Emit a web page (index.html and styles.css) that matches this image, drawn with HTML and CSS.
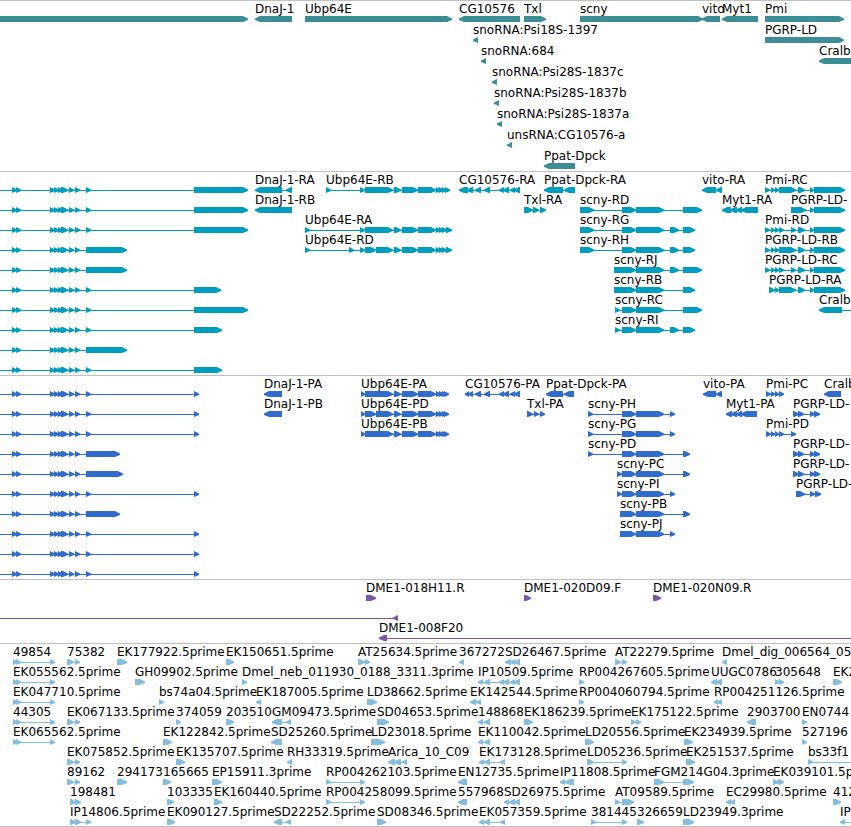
FILE: index.html
```html
<!DOCTYPE html>
<html lang="en">
<head>
  <meta charset="UTF-8" />
  <meta name="viewport" content="width=device-width, initial-scale=1.0"/>
  <title>Genome Browser</title>
  <link rel="stylesheet" href="styles.css">
</head>
<body>
  <main class="browser">
    <section class="track genes" id="genes" aria-label="Genes"></section>
    <section class="track transcripts" id="transcripts" aria-label="Transcripts"></section>
    <section class="track proteins" id="proteins" aria-label="Proteins"></section>
    <section class="track clones" id="clones" aria-label="BAC ends"></section>
    <section class="track ests" id="ests" aria-label="ESTs"></section>
  </main>

  <script src="tracks.js"></script>
</body>
</html>
```

FILE: styles.css
```css
body {
  margin: 0;
  background: #fff;
  color: #000;
  font-family: "DejaVu Sans", sans-serif;
  font-size: 12px;
}

.browser {
  overflow: hidden;
  border-bottom: 1px solid #c0c0c0;
}

.track {
  border-top: 1px solid #c0c0c0;
  padding-bottom: 3px;
}

.row {
  position: relative;
  height: 20px;
}

/* features sit at their genome position inside the row */
.label {
  position: absolute;
  top: 0;
  line-height: 16px;
  white-space: nowrap;
}

.glyphs {
  display: block;
  width: 100%;
  height: 20px;
  overflow: visible;
  fill: currentColor;
}

.genes {
  padding-bottom: 2px;
}

.genes .row {
  height: 21px;
}

.ests {
  padding-bottom: 2px;
}

.genes .glyphs {
  color: #3d8e94;
}

.transcripts .glyphs {
  color: #009dbf;
}

.proteins .glyphs {
  color: #2f6ccb;
}

.clones .glyphs {
  color: #7657a8;
}

.ests .glyphs {
  color: #85bddf;
}
```

FILE: tracks.js
```js
// feature: [label, strand, blocks, line start, line end]
const EDGE = 4000;

const head = [[12,17],[16,21],[50,55],[54,59],[58,63],[61,68],[69,74],[75,80]];
const long = (a, b) => ["", "+", [...head, [86,91], [a,b]], 0];
const short = b => ["", "+", [...head, [86,b]], 0];

const ubp = [[394,401],[402,418],[418,436],[436,441],[439,444],[442,447]];
const cg = [[475,481],[484,490],[499,504],[503,509],[510,515],[514,520]];
const scny = [[622,636],[636,664]];
const pmi = [[771,775],[775,779]];
const ld = [[798,805],[810,814],[814,845]];
const ldp = [[793,799],[798,804],[810,815],[814,820]];
const ek = [[13,18],[16,21],[50,55]];
const ek2 = [[67,74],[75,80]];

const tracks = {
  genes: [
    [
      ["", "+", [[-10,248]]],
      ["DnaJ-1", "-", [[255,292]]],
      ["Ubp64E", "+", [[305,452]]],
      ["CG10576", "-", [[459,520]]],
      ["Txl", "+", [[524,546]]],
      ["scny", "+", [[580,703]]],
      ["vito", "-", [[702,720]]],
      ["Myt1", "-", [[722,758]]],
      ["Pmi", "+", [[765,844]]]
    ],
    [
      ["snoRNA:Psi18S-1397", "-", [[473,478]]],
      ["PGRP-LD", "+", [[765,844]]]
    ],
    [
      ["snoRNA:684", "-", [[481,486]]],
      ["Cralb", "-", [[819,EDGE]]]
    ],
    [["snoRNA:Psi28S-1837c", "-", [[492,497]]]],
    [["snoRNA:Psi28S-1837b", "-", [[494,499]]]],
    [["snoRNA:Psi28S-1837a", "-", [[497,502]]]],
    [["unsRNA:CG10576-a", "-", [[507,512]]]],
    [["Ppat-Dpck", "-", [[544,575]]]]
  ],

  transcripts: [
    [
      long(194, 248),
      ["DnaJ-1-RA", "-", [[255,282],[286,292]]],
      ["Ubp64E-RB", "+", [[326,331],[360,365],[365,393],...ubp,[445,450]]],
      ["CG10576-RA", "-", [[459,468],[467,473],...cg]],
      ["Ppat-Dpck-RA", "-", [[544,563],[564,575]]],
      ["vito-RA", "-", [[702,716],[716,722]]],
      ["Pmi-RC", "+", [[765,770],...pmi,[779,796],...ld]]
    ],
    [
      long(194, 248),
      ["DnaJ-1-RB", "-", [[255,292]]],
      ["Txl-RA", "+", [[524,533],[533,539],[540,546]]],
      ["scny-RD", "+", [[580,594],...scny,[683,702]]],
      ["Myt1-RA", "-", [[722,731],[730,737],[736,742],[741,758]]],
      ["PGRP-LD-", "+", [[791,806],[810,814],[814,845]]]
    ],
    [
      long(194, 248),
      ["Ubp64E-RA", "+", [[305,310],[360,365],[365,393],...ubp,[446,452]]],
      ["scny-RG", "+", [[580,594],...scny,[670,679],[683,695]]],
      ["Pmi-RD", "+", [[765,770],...pmi,[779,784],[791,796],...ld]]
    ],
    [
      short(127),
      ["Ubp64E-RD", "+", [[305,310],[349,354],[360,365],[365,376],[376,393],...ubp,[446,452]]],
      ["scny-RH", "+", [[580,594],...scny,[670,679],[683,695]]],
      ["PGRP-LD-RB", "+", [[765,770],...pmi,[779,796],...ld]]
    ],
    [
      short(127),
      ["scny-RJ", "+", [[614,636],[636,664],[670,679],[683,702]]],
      ["PGRP-LD-RC", "+", [[765,770],...pmi,[779,784],[791,796],...ld]]
    ],
    [
      long(194, 221),
      ["scny-RB", "+", [[614,636],[636,664],[683,695]]],
      ["PGRP-LD-RA", "+", [[769,775],[775,779],[779,796],...ld]]
    ],
    [
      long(194, 248),
      ["scny-RC", "+", [[615,620],...scny,[683,702]]],
      ["Cralb", "-", [[819,842]], 819, EDGE]
    ],
    [
      long(194, 222),
      ["scny-RI", "+", [[615,620],...scny,[670,679],[683,695]]]
    ],
    [short(127)],
    [long(194, 222)]
  ],

  proteins: [
    [
      long(194, 199),
      ["DnaJ-1-PA", "-", [[264,282]]],
      ["Ubp64E-PA", "+", [[361,365],[365,393],...ubp,[444,449]]],
      ["CG10576-PA", "-", [[465,469],[468,473],...cg]],
      ["Ppat-Dpck-PA", "-", [[546,563],[564,574]]],
      ["vito-PA", "-", [[703,716],[716,722]]],
      ["Pmi-PC", "+", [[766,771],...pmi,[779,784]]],
      ["Cralb", "-", [[824,841]]]
    ],
    [
      long(194, 199),
      ["DnaJ-1-PB", "-", [[264,282]]],
      ["Ubp64E-PD", "+", [[361,365],[365,376],[376,393],...ubp,[444,449]]],
      ["Txl-PA", "+", [[527,533],[534,539],[540,545]]],
      ["scny-PH", "+", [[588,593],...scny,[670,675]]],
      ["Myt1-PA", "-", [[726,732],[731,737],[736,742],[741,757]]],
      ["PGRP-LD-", "+", ldp]
    ],
    [
      long(194, 199),
      ["Ubp64E-PB", "+", [[361,365],[365,393],...ubp,[444,449]]],
      ["scny-PG", "+", [[588,593],...scny,[670,675]]],
      ["Pmi-PD", "+", [[766,771],...pmi,[779,784],[791,796]]]
    ],
    [
      short(120),
      ["scny-PD", "+", [[588,593],...scny,[683,690]]],
      ["PGRP-LD-", "+", ldp]
    ],
    [
      short(123),
      ["scny-PC", "+", [[617,622],...scny,[683,690]]],
      ["PGRP-LD-", "+", ldp]
    ],
    [
      long(194, 199),
      ["scny-PI", "+", [[617,622],...scny,[670,675]]],
      ["PGRP-LD-", "+", [[796,805],[810,815],[815,821]]]
    ],
    [
      short(120),
      ["scny-PB", "+", [[620,636],[636,664],[683,690]]]
    ],
    [
      long(194, 199),
      ["scny-PJ", "+", [[620,636],[636,664],[670,675]]]
    ],
    [long(194, 199)],
    [long(194, 199)]
  ],

  clones: [
    [
      ["DME1-018H11.R", "+", [[366,376]]],
      ["DME1-020D09.F", "+", [[524,531]]],
      ["DME1-020N09.R", "+", [[653,661]]]
    ],
    [["", "-", [[393,398]], 0]],
    [["DME1-008F20", "-", [[379,387]], 379, EDGE]]
  ],

  ests: [
    [
      ["49854", "+", ek],
      ["75382", "+", ek2],
      ["EK177922.5prime", "+", [[117,127]]],
      ["EK150651.5prime", "+", [[226,234]]],
      ["AT25634.5prime", "+", [[358,365],[365,370]]],
      ["367272", "-", [[459,464]]],
      ["SD26467.5prime", "-", [[505,511],[510,515],[514,520]]],
      ["AT22279.5prime", "+", [[615,621],[622,627]]],
      ["Dmel_dig_006564_05", "-", [[722,727]]]
    ],
    [
      ["EK055562.5prime", "+", ek],
      ["GH09902.5prime", "+", [[135,145]]],
      ["Dmel_neb_011930_0188_3311.3prime", "+", [[242,247]]],
      ["IP10509.5prime", "-", [[478,483],[484,490],[499,504],[503,509],[510,515],[514,520]]],
      ["RP004267605.5prime", "+", [[579,584]]],
      ["UUGC0786", "-", [[711,717],[716,722]]],
      ["305648", "+", [[775,780],[779,784]]],
      ["EK2", "+", [[833,842]]]
    ],
    [
      ["EK047710.5prime", "+", ek],
      ["bs74a04.5prime", "+", [[159,164]]],
      ["EK187005.5prime", "-", [[256,261]]],
      ["LD38662.5prime", "+", [[367,377]]],
      ["EK142544.5prime", "-", [[470,476],[476,481]]],
      ["RP004060794.5prime", "+", [[579,584]]],
      ["RP004251126.5prime", "-", [[714,718],[717,722]]]
    ],
    [
      ["44305", "+", ek],
      ["EK067133.5prime", "+", ek2],
      ["374059", "+", [[176,181]]],
      ["203510", "+", [[226,234]]],
      ["GM09473.5prime", "-", [[272,282],[286,291]]],
      ["SD04653.5prime", "+", [[377,389]]],
      ["148868", "-", [[478,483],[484,490]]],
      ["EK186239.5prime", "+", [[524,533]]],
      ["EK175122.5prime", "+", [[631,636],[636,641]]],
      ["2903700", "-", [[747,756]]],
      ["EN0744", "+", [[802,807]]]
    ],
    [
      ["EK065562.5prime", "+", ek],
      ["EK122842.5prime", "+", [[163,172]]],
      ["SD25260.5prime", "-", [[271,282]]],
      ["LD23018.5prime", "+", [[371,385]]],
      ["EK110042.5prime", "-", [[478,483],[484,490]]],
      ["LD20556.5prime", "+", [[585,594]]],
      ["EK234939.5prime", "+", [[684,693]]],
      ["527196", "+", [[802,807]]]
    ],
    [
      ["EK075852.5prime", "+", ek2],
      ["EK135707.5prime", "+", [[176,185]]],
      ["RH33319.5prime", "-", [[287,292]]],
      ["Arica_10_C09", "-", [[388,395],[394,401],[402,407]]],
      ["EK173128.5prime", "-", [[479,484],[484,490],[500,505]]],
      ["LD05236.5prime", "+", [[587,594],[622,627]]],
      ["EK251537.5prime", "+", [[686,695]]],
      ["bs33f1", "+", [[808,813]], 808, EDGE]
    ],
    [
      ["89162", "+", ek2],
      ["294173", "+", [[117,127]]],
      ["165665", "+", [[163,171]]],
      ["EP15911.3prime", "+", [[212,222]]],
      ["RP004262103.5prime", "+", [[326,331],[360,365]]],
      ["EN12735.5prime", "-", [[458,467]]],
      ["IP11808.5prime", "-", [[560,565],[565,574]]],
      ["FGM214G04.3prime", "+", [[654,664],[683,694]]],
      ["EK039101.5prime", "+", [[773,779],[778,784]]]
    ],
    [
      ["198481", "+", [[70,76],[75,81]]],
      ["103335", "+", [[167,174]]],
      ["EK160440.5prime", "+", [[214,222]]],
      ["RP004258099.5prime", "+", [[326,331],[360,365]]],
      ["557968", "-", [[458,467]]],
      ["SD26975.5prime", "-", [[504,509],[509,515],[514,520]]],
      ["AT09589.5prime", "+", [[615,620],[622,634]]],
      ["EC29980.5prime", "-", [[726,731],[730,735]]],
      ["412", "+", [[833,841]]]
    ],
    [
      ["IP14806.5prime", "+", [[70,76],[75,81],[86,91]]],
      ["EK090127.5prime", "+", [[167,175]]],
      ["SD22252.5prime", "-", [[274,282],[286,291]]],
      ["SD08346.5prime", "+", [[377,386]]],
      ["EK057359.5prime", "-", [[479,484],[484,490],[500,505]]],
      ["381445", "+", [[591,596],[622,627]]],
      ["326659", "+", [[637,644]]],
      ["LD23949.3prime", "+", [[683,694]]],
      ["IP", "-", [[840,845]], 840, EDGE]
    ]
  ]
};

// a block is a bar with a blunt 5px arrow head on its strand side
function blockPath(strand, a, b) {
  if (strand === "+") {
    const neck = Math.max(a, b - 5);
    return `M${a} 15H${neck}L${b} 17.5V19L${neck} 21H${a}Z`;
  }
  const neck = Math.min(b, a + 5);
  return `M${b} 15H${neck}L${a} 17.5V19L${neck} 21H${b}Z`;
}

function drawRow(features) {
  let shapes = "";
  let labels = "";
  features.forEach(([label, strand, blocks, from, to]) => {
    const start = from ?? blocks[0][0];
    const end = to ?? blocks[blocks.length - 1][1];
    if (blocks.length > 1 || from !== undefined) {
      shapes += `<rect x="${start}" y="18" width="${end - start}" height="1"/>`;
    }
    // one path per block, so overlapping heads stack instead of cancelling
    blocks.forEach(([a, b]) => {
      shapes += `<path d="${blockPath(strand, a, b)}"/>`;
    });
    if (label) {
      labels += `<span class="label" style="left:${blocks[0][0]}px">${label}</span>`;
    }
  });
  return `<div class="row"><svg class="glyphs" aria-hidden="true">${shapes}</svg>${labels}</div>`;
}

Object.keys(tracks).forEach(id => {
  document.getElementById(id).innerHTML = tracks[id].map(drawRow).join("");
});
```
